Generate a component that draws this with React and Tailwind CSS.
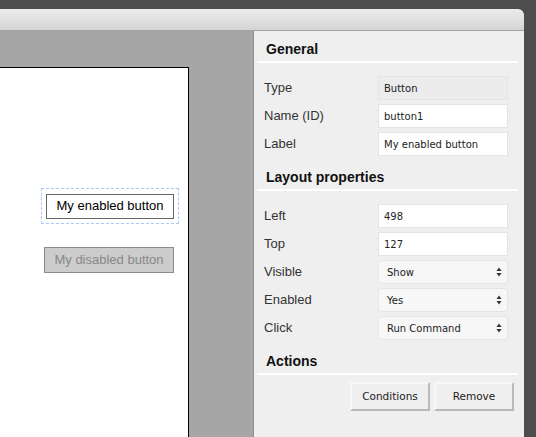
import React from "react";

const sans = { fontFamily: '"Liberation Sans", Arial, sans-serif' };
const ui = { fontFamily: '"DejaVu Sans", "Liberation Sans", sans-serif' };

function Section({ title, children, gap = "mt-[13px]" }) {
  return (
    <div className={gap}>
      <div className="pl-[9px] text-[14px] leading-[17px] font-bold text-[#111]" style={sans}>
        {title}
      </div>
      <div className="mt-[3px] h-[2px] bg-white mr-[6px]" />
      {children}
    </div>
  );
}

function Arrows() {
  return (
    <svg width="6" height="10" viewBox="0 0 6 10" className="text-[#333]">
      <path d="M3 0.5 L5.5 4 L0.5 4 Z" fill="currentColor" />
      <path d="M3 9.5 L5.5 6 L0.5 6 Z" fill="currentColor" />
    </svg>
  );
}

function Row({ label, value, kind = "input" }) {
  let box;
  if (kind === "select") {
    box = (
      <div className="w-[130px] h-[24px] rounded-[4px] bg-[#f7f7f7] border border-[#e4e4e4] flex items-center justify-between pl-[8px] pr-[5px]">
        <span className="text-[10px] text-[#222]" style={ui}>{value}</span>
        <Arrows />
      </div>
    );
  } else {
    box = (
      <div
        className={
          "w-[130px] h-[24px] border border-[#e4e4e4] flex items-center pl-[5px] " +
          (kind === "readonly" ? "bg-[#ececec]" : "bg-white")
        }
      >
        <span className="text-[10px] text-[#222]" style={ui}>{value}</span>
      </div>
    );
  }
  return (
    <div className="flex items-center h-[24px]">
      <div className="w-[121px] pl-[7px] text-[13px] text-[#333]" style={sans}>
        {label}
      </div>
      {box}
    </div>
  );
}

function ActionButton({ children }) {
  return (
    <button
      className="w-[80px] h-[29px] bg-[#efefef] border-2 border-t-[#f7f7f7] border-l-[#f7f7f7] border-b-[#b9b9b9] border-r-[#b9b9b9] text-[10.5px] text-[#222]"
      style={ui}
    >
      {children}
    </button>
  );
}

export default function App() {
  return (
    <div className="w-[536px] h-[437px] bg-[#4d4d4d] pt-[9px] flex flex-col overflow-hidden">
      <div className="w-[524px] flex-1 flex flex-col rounded-tr-[6px] overflow-hidden">
        <div className="h-[22px] bg-gradient-to-b from-[#ececec] to-[#d4d4d4] border-b border-[#a4a4a4]" />
        <div className="flex flex-1 min-h-0">
          <div className="w-[254px] bg-[#a6a6a6] border-r border-[#8e8e8e] pt-[36px] flex flex-col">
            <div className="relative w-[189px] flex-1 bg-white border-t border-r border-black">
              <div className="absolute left-[41px] top-[120px] w-[138px] h-[36px] border border-dashed border-[#a9c8f5] flex items-center justify-center">
                <div
                  className="w-[128px] h-[25px] border border-[#666] bg-white flex items-center justify-center text-[13px] text-black"
                  style={sans}
                >
                  My enabled button
                </div>
              </div>
              <div
                className="absolute left-[44px] top-[179px] w-[130px] h-[26px] border border-[#8a8a8a] bg-[#cccccc] flex items-center justify-center text-[13px] text-[#888]"
                style={sans}
              >
                My disabled button
              </div>
            </div>
          </div>
          <div className="flex-1 bg-[#efefef] pl-[3px] pt-[10px]">
            <Section title="General" gap="">
              <div className="mt-[13px] flex flex-col gap-[4px]">
                <Row label="Type" value="Button" kind="readonly" />
                <Row label="Name (ID)" value="button1" />
                <Row label="Label" value="My enabled button" />
              </div>
            </Section>
            <Section title="Layout properties">
              <div className="mt-[13px] flex flex-col gap-[4px]">
                <Row label="Left" value="498" />
                <Row label="Top" value="127" />
                <Row label="Visible" value="Show" kind="select" />
                <Row label="Enabled" value="Yes" kind="select" />
                <Row label="Click" value="Run Command" kind="select" />
              </div>
            </Section>
            <Section title="Actions" gap="mt-[13px]">
              <div className="mt-[7px] flex justify-end gap-[4px] pr-[10px]">
                <ActionButton>Conditions</ActionButton>
                <ActionButton>Remove</ActionButton>
              </div>
            </Section>
          </div>
        </div>
      </div>
    </div>
  );
}
